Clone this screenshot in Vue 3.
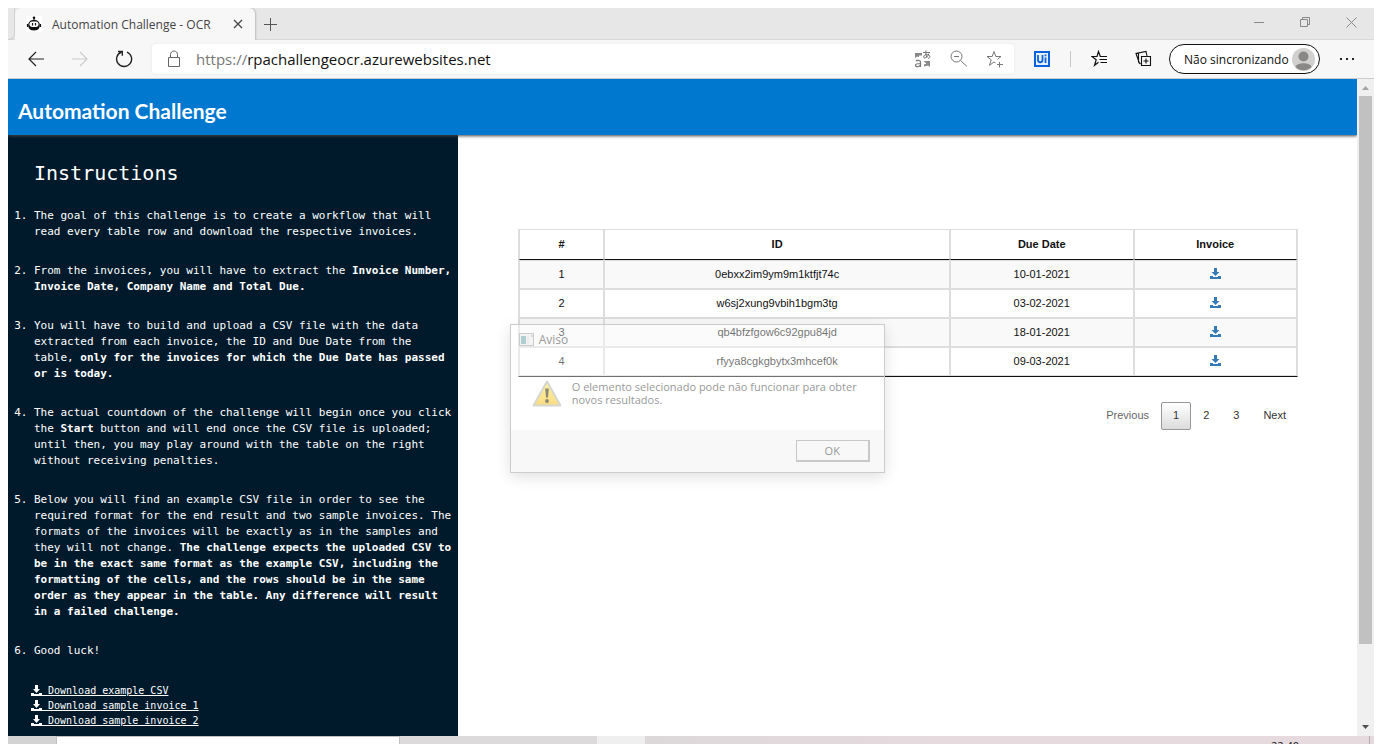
<script setup>
import { ref } from 'vue'

const protocol = 'https://'
const address = ref('rpachallengeocr.azurewebsites.net')

const invoices = [
  { n: 1, id: '0ebxx2im9ym9m1ktfjt74c', due: '10-01-2021' },
  { n: 2, id: 'w6sj2xung9vbih1bgm3tg', due: '03-02-2021' },
  { n: 3, id: 'qb4bfzfgow6c92gpu84jd', due: '18-01-2021' },
  { n: 4, id: 'rfyya8cgkgbytx3mhcef0k', due: '09-03-2021' },
]

const downloads = [
  'Download example CSV',
  'Download sample invoice 1',
  'Download sample invoice 2',
]

const pages = [1, 2, 3]
const currentPage = ref(1)
</script>

<template>
  <div class="desktop">
    <div class="browser">
      <div class="tabstrip">
        <div class="tab-edge"></div>
        <div class="tab">
          <svg class="favicon" width="16" height="16" viewBox="0 0 16 16" aria-hidden="true">
            <rect width="16" height="16" fill="#fff" />
            <circle cx="8" cy="1.800" r="1.300" fill="#111" />
            <path d="M8 2v3" stroke="#111" stroke-width="1.200" />
            <path d="M8 4c3.800 0 5.800 2 5.800 5.300 0 3.500-2.300 5.200-5.800 5.200s-5.800-1.700-5.800-5.200C2.200 6 4.200 4 8 4z" fill="#111" />
            <path d="M1.500 8v3M14.500 8v3" stroke="#111" stroke-width="1.200" />
            <rect x="3.500" y="5.500" width="9" height="5.500" rx="2.700" fill="#fff" />
            <path d="M6.500 7v2.400M9.500 7v2.400" stroke="#111" stroke-width="1.200" />
          </svg>
          <span class="tab-title">Automation Challenge - OCR</span>
          <button class="icon-btn tab-close" aria-label="Close tab">
            <svg width="10" height="10" viewBox="0 0 10 10"><path d="M1 1l8 8M9 1l-8 8" stroke="#444" stroke-width="1.300" /></svg>
          </button>
        </div>
        <button class="icon-btn new-tab" aria-label="New tab">
          <svg width="13" height="13" viewBox="0 0 13 13"><path d="M6.500 0v13M0 6.500h13" stroke="#555" /></svg>
        </button>
        <div class="window-controls">
          <button class="icon-btn" aria-label="Minimize">
            <svg width="11" height="11" viewBox="0 0 11 11"><path d="M0 5.500h10" stroke="#888" /></svg>
          </button>
          <button class="icon-btn" aria-label="Restore">
            <svg width="11" height="11" viewBox="0 0 11 11" fill="none" stroke="#888"><path d="M.5 2.500h7v7h-7zM2.500 2.500v-2h7v7h-2" /></svg>
          </button>
          <button class="icon-btn" aria-label="Close">
            <svg width="11" height="11" viewBox="0 0 11 11"><path d="M.5 .5l10 10M10.500 .5l-10 10" stroke="#888" /></svg>
          </button>
        </div>
      </div>

      <div class="toolbar">
        <button class="icon-btn nav" aria-label="Back">
          <svg width="16" height="16" viewBox="0 0 16 16" fill="none" stroke="#222" stroke-width="1.200"><path d="M16 8H1M8 1L1 8l7 7" /></svg>
        </button>
        <button class="icon-btn nav" aria-label="Forward">
          <svg width="16" height="16" viewBox="0 0 16 16" fill="none" stroke="#ccc" stroke-width="1.200"><path d="M0 8h15M8 1l7 7-7 7" /></svg>
        </button>
        <button class="icon-btn nav" aria-label="Refresh">
          <svg width="18" height="18" viewBox="0 0 18 18" fill="none" stroke="#222" stroke-width="1.400"><path d="M12 2.100A7.500 7.500 0 1 1 6.500 2" /><path d="M3 1.500h4.300v4.300" /></svg>
        </button>
        <div class="address">
          <svg class="lock" width="14" height="18" viewBox="0 0 14 18" fill="none" stroke="#666"><path d="M1.500 7.500h11v9h-11zM3.500 7.500V4.500c0-2 1.500-3.500 3.500-3.500s3.500 1.500 3.500 3.500v3" /></svg>
          <label class="protocol" for="url">{{ protocol }}</label>
          <input id="url" v-model="address" class="url" type="text" />
          <button class="icon-btn field-icon" aria-label="Translate">
            <svg width="18" height="18" viewBox="0 0 18 18" fill="none" stroke="#777">
              <path d="M1 3h7v2.500H5V7L3 6.500 1 8z" fill="#888" stroke="none" />
              <path d="M9.500 11H16v6l-2-1.500-4 1v-2l2.500-1z" fill="#888" stroke="none" />
              <path d="M9 2.500h7M12 .5c-.3 3 0 5 1 7M15 3.500c-1 3-3 4.500-4.500 4.500s-1-3.500 2-3.500c3.500 0 5 3 1.500 4" />
              <path d="M2 11c1-1 4.500-1 4.500 1v5M6.500 13.500c-4 0-5 .5-5 1.800 0 2 4 1.700 5-.3" stroke-width="1.200" />
            </svg>
          </button>
          <button class="icon-btn field-icon" aria-label="Zoom out">
            <svg width="18" height="18" viewBox="0 0 18 18" fill="none" stroke="#777"><circle cx="6.500" cy="6.500" r="5.500" /><path d="M10.500 10.500l6.500 6M4 6.500h5" /></svg>
          </button>
          <button class="icon-btn field-icon" aria-label="Add favorite">
            <svg width="18" height="18" viewBox="0 0 18 18" fill="none" stroke="#777"><path d="M9.500 13L8 12l-4.500 3.300 1.700-5.500L1 6.500h5.200L8 1.500l1.800 5H15L11.500 9.300M11 14.500h6M13.500 12v5.500" /></svg>
          </button>
        </div>
        <button class="icon-btn uipath" aria-label="UiPath">
          <svg width="16" height="16" viewBox="0 0 16 16" fill="none">
            <rect x="1" y="1" width="14" height="14" fill="#e8f1ff" stroke="#0b62dd" stroke-width="2" />
            <path d="M4 4v5c0 3 4.500 3 4.500 0V4M11.500 6.500V12M11.500 3.500v1.800" stroke="#0b62dd" stroke-width="1.800" />
          </svg>
        </button>
        <span class="divider"></span>
        <button class="icon-btn tool" aria-label="Favorites">
          <svg width="18" height="18" viewBox="0 0 18 18" fill="none" stroke="#111" stroke-width="1.200"><path d="M7.500 12.300L3.500 15.300l1.700-5.500L1 6.500h5L7.500 1.500l1.800 5H13M8.500 9.500H16M9.500 12.500H16M9 6.500h7" /></svg>
        </button>
        <button class="icon-btn tool" aria-label="Collections">
          <svg width="18" height="18" viewBox="0 0 18 18" fill="none" stroke="#111" stroke-width="1.100"><path d="M6.500 6.500h9v9h-9zM11 8.500v5M8.500 11h5M4.500 13.500L1.500 5 1 3.500l10-2 1 4.500M3.500 3v9l2 2" /></svg>
        </button>
        <button class="profile">
          <span>Não sincronizando</span>
          <svg width="23" height="23" viewBox="0 0 23 23">
            <circle cx="11.500" cy="11.500" r="11.500" fill="#d2d0ce" />
            <circle cx="11.500" cy="8.500" r="5" fill="#8a8886" />
            <path d="M3.500 19c1-5 15-5 16 0a11.500 11.500 0 0 1-16 0z" fill="#8a8886" />
          </svg>
        </button>
        <button class="icon-btn more" aria-label="Settings and more">
          <svg width="16" height="4" viewBox="0 0 16 4" fill="#222"><path d="M1 1h2v2H1zM7 1h2v2H7zM13 1h2v2h-2z" /></svg>
        </button>
      </div>

      <div class="viewport">
        <div class="page">
          <header class="banner"><h1>Automation Challenge</h1></header>
          <div class="columns">
            <aside class="sidebar">
              <h2>Instructions</h2>
              <ol class="steps">
                <li>The goal of this challenge is to create a workflow that will read every table row and download the respective invoices.</li>
                <li>From the invoices, you will have to extract the <b>Invoice Number, Invoice Date, Company Name and Total Due.</b></li>
                <li>You will have to build and upload a CSV file with the data extracted from each invoice, the ID and Due Date from the table, <b>only for the invoices for which the Due Date has passed or is today.</b></li>
                <li>The actual countdown of the challenge will begin once you click the <b>Start</b> button and will end once the CSV file is uploaded; until then, you may play around with the table on the right without receiving penalties.</li>
                <li>Below you will find an example CSV file in order to see the required format for the end result and two sample invoices. The formats of the invoices will be exactly as in the samples and they will not change. <b>The challenge expects the uploaded CSV to be in the exact same format as the example CSV, including the formatting of the cells, and the rows should be in the same order as they appear in the table. Any difference will result in a failed challenge.</b></li>
                <li>Good luck!</li>
              </ol>
              <div class="downloads">
                <a v-for="d in downloads" :key="d" href="#">
                  <svg width="11" height="11" viewBox="0 0 11 11" fill="#fff"><path d="M4 0h3v4h2L5.500 8 2 4h2zM0 8h3v1h5V8h3v3H0z" /></svg>
                  <span>&nbsp;{{ d }}</span>
                </a>
              </div>
            </aside>

            <main class="content">
              <table>
                <thead>
                  <tr>
                    <th class="c-num">#</th>
                    <th class="c-id">ID</th>
                    <th class="c-due">Due Date</th>
                    <th class="c-inv">Invoice</th>
                  </tr>
                </thead>
                <tbody>
                  <tr v-for="row in invoices" :key="row.n">
                    <td>{{ row.n }}</td>
                    <td>{{ row.id }}</td>
                    <td>{{ row.due }}</td>
                    <td>
                      <a href="#" aria-label="Download invoice">
                        <svg width="11" height="11" viewBox="0 0 11 11" fill="#337ab7"><path d="M4 0h3v4h2.500L5.500 8 1.500 4H4zM0 8h3v1h5V8h3v3H0z" /></svg>
                      </a>
                    </td>
                  </tr>
                </tbody>
              </table>

              <nav class="pagination">
                <button class="prev">Previous</button>
                <button
                  v-for="p in pages"
                  :key="p"
                  :class="{ current: p === currentPage }"
                  @click="currentPage = p"
                >{{ p }}</button>
                <button>Next</button>
              </nav>

              <div class="dialog" role="dialog" aria-labelledby="dlg-title">
                <div class="dlg-head">
                  <svg width="15" height="13" viewBox="0 0 15 13">
                    <rect x=".5" y=".5" width="14" height="12" fill="#f4f4f4" stroke="#ccc" />
                    <rect x="2" y="3" width="5" height="8" fill="#b0cdd0" />
                    <path d="M9 2v9" stroke="#e4e4e4" /><path d="M12 3h2" stroke="#bbb" />
                  </svg>
                  <span id="dlg-title">Aviso</span>
                </div>
                <div class="dlg-body">
                  <svg width="30" height="27" viewBox="0 0 30 27">
                    <defs>
                      <linearGradient id="warn" x1="0" y1="0" x2="0" y2="1">
                        <stop offset="0" stop-color="#faf3a0" />
                        <stop offset="1" stop-color="#fadc85" />
                      </linearGradient>
                    </defs>
                    <path d="M15 1.500L28.500 25.500h-27z" fill="url(#warn)" stroke="#d6d6d0" stroke-width="2" stroke-linejoin="round" />
                    <path d="M13.200 8.500h3.600l-.8 9h-2z" fill="#8b8876" />
                    <circle cx="15" cy="21" r="1.900" fill="#8b8876" />
                  </svg>
                  <p>O elemento selecionado pode não funcionar para obter novos resultados.</p>
                </div>
                <div class="dlg-foot"><button>OK</button></div>
              </div>
            </main>
          </div>
        </div>
        <div class="scrollbar" aria-hidden="true">
          <svg width="17" height="17" viewBox="0 0 17 17"><path d="M5 11l3.500-4 3.500 4z" fill="#a3a3a3" /></svg>
          <div class="track"><div class="thumb"></div></div>
          <svg width="17" height="17" viewBox="0 0 17 17"><path d="M5 6h7l-3.500 4z" fill="#505050" /></svg>
        </div>
      </div>
    </div>
    <div class="taskbar">
      <div class="tb-start"></div>
      <div class="tb-search"></div>
      <div class="tb-apps"></div>
      <div class="tb-active"></div>
      <div class="tb-rest"><span class="clock">22:40</span><span class="peek"></span></div>
    </div>
  </div>
</template>

<style>
body {
  margin: 0;
  background: #fff;
}
</style>

<style scoped>
* {
  box-sizing: border-box;
}
button {
  font: inherit;
  padding: 0;
  border: 0;
  background: none;
  color: inherit;
}
svg {
  display: block;
  flex: none;
}
.desktop {
  display: flex;
  flex-direction: column;
  height: 100vh;
  padding: 8px 8px 0;
  overflow: hidden;
  font-family: "Open Sans", "Noto Sans", sans-serif;
}
.browser {
  flex: 1;
  min-height: 0;
  display: flex;
  flex-direction: column;
}
.icon-btn {
  display: flex;
  align-items: center;
  justify-content: center;
}

.tabstrip {
  flex: none;
  display: flex;
  height: 32px;
  background: #e7e7e7;
  box-shadow: inset 0 -1px #d9d9d9;
}
.tab-edge {
  width: 7px;
  border-right: 1px solid #d0d0d0;
  border-bottom: 1px solid #ccc;
  border-radius: 0 0 6px 0;
}
.tab {
  display: flex;
  align-items: center;
  width: 240px;
  padding: 0 11px;
  background: #f7f7f7;
  border-radius: 6px 6px 0 0;
  box-shadow: 1px 0 2px #bbb;
  clip-path: inset(0 -4px 0 0);
}
.tab-title {
  flex: 1;
  margin-left: 10px;
  font-size: 12px;
  color: #444;
  white-space: nowrap;
}
.tab-close {
  width: 12px;
}
.new-tab {
  width: 30px;
}
.window-controls {
  display: flex;
  margin-left: auto;
}
.window-controls button {
  width: 46px;
  height: 28px;
}

.toolbar {
  flex: none;
  display: flex;
  align-items: center;
  height: 39px;
  padding-left: 6px;
  background: #f7f7f7;
  border-bottom: 1px solid #ccc;
}
.nav {
  width: 44px;
}
.address {
  flex: 1;
  display: flex;
  align-items: center;
  height: 30px;
  margin-left: 6px;
  padding: 0 1px 0 15px;
  background: #fff;
  border-radius: 4px;
  box-shadow: 0 0 3px #e4e4e4;
  font-size: 15px;
}
.protocol {
  margin-left: 15px;
  color: #777;
}
.url {
  flex: 1;
  min-width: 0;
  padding: 0;
  border: 0;
  outline: 0;
  background: none;
  font: inherit;
  color: #111;
}
.field-icon {
  width: 36px;
}
.uipath {
  width: 16px;
  margin-left: 20px;
}
.divider {
  width: 1px;
  height: 16px;
  margin: 0 7px 0 20px;
  background: #c6c6c6;
}
.tool {
  width: 44px;
}
.profile {
  display: flex;
  align-items: center;
  justify-content: space-between;
  width: 151px;
  height: 30px;
  margin-left: 3px;
  padding: 0 4px 0 14px;
  border: 1px solid #111;
  border-radius: 15px;
  background: #fff;
  font-size: 12px;
  color: #111;
  white-space: nowrap;
}
.more {
  width: 54px;
}

.viewport {
  flex: 1;
  min-height: 0;
  display: flex;
}
.page {
  flex: 1;
  min-width: 0;
  display: flex;
  flex-direction: column;
  overflow: hidden;
}
.banner {
  z-index: 1;
  flex: none;
  display: flex;
  align-items: center;
  height: 56px;
  padding: 6px 10px 0;
  background: #0078d0;
  box-shadow: 0 1px 3px #444;
}
.banner h1 {
  margin: 0;
  font: 700 21px Lato, "Noto Sans", sans-serif;
  color: #fff;
}
.columns {
  flex: 1;
  min-height: 0;
  display: flex;
}
.sidebar {
  flex: none;
  width: 33.34%;
  padding: 26px 6px 0 26px;
  background: #001a2c;
  color: #fff;
  font-family: "DejaVu Sans Mono", "Liberation Mono", monospace;
  overflow: hidden;
}
.sidebar h2 {
  margin: 0;
  font-size: 20px;
  font-weight: 400;
  line-height: 24px;
}
.steps {
  margin: 23px 0 0;
  padding: 0;
  font-size: 11px;
  line-height: 16px;
}
.steps li {
  margin-bottom: 23px;
}
.downloads {
  display: flex;
  flex-direction: column;
  align-items: flex-start;
  margin-left: -3px;
  padding-top: 1px;
  font-size: 10px;
  line-height: 15px;
}
.downloads a {
  display: flex;
  align-items: center;
  color: #fff;
  text-decoration: none;
}
.downloads span {
  text-decoration: underline;
}

.content {
  position: relative;
  flex: 1;
  min-width: 0;
  padding: 94px 59px 0 60px;
  font: 11px "Liberation Sans", Arial, sans-serif;
  color: #111;
}
table {
  width: 100%;
  table-layout: fixed;
  border: solid #ddd;
  border-width: 0 1px;
  border-bottom: 1px solid #111;
  border-spacing: 0;
  text-align: center;
}
th,
td {
  height: 29px;
  padding: 0 0 2px;
  border: 1px solid #ddd;
}
th {
  height: 31px;
  border-bottom-color: #111;
}
.c-num { width: 11%; }
.c-id { width: 44.4%; }
.c-due { width: 23.6%; }
.c-inv { width: 21%; }
tbody tr:nth-child(odd) td {
  background: #f9f9f9;
}
td svg {
  margin: 0 auto;
}
.pagination {
  display: flex;
  justify-content: flex-end;
  margin-top: 25px;
  color: #333;
}
.pagination button {
  height: 28px;
  padding: 0 11px 2px;
  border: 1px solid transparent;
  border-radius: 2px;
}
.pagination .prev {
  color: #666;
}
.pagination .current {
  border-color: #979797;
  background: linear-gradient(#fff, #dcdcdc);
}

.dialog {
  position: absolute;
  left: 52px;
  top: 189px;
  display: flex;
  flex-direction: column;
  width: 375px;
  height: 149px;
  border: 1px solid #ccc;
  background: rgba(255, 255, 255, 0.4);
  box-shadow: 0 4px 14px rgba(0, 0, 0, 0.12);
  font-family: "Open Sans", "Noto Sans", sans-serif;
  color: #999;
}
.dlg-head {
  display: flex;
  align-items: center;
  gap: 5px;
  height: 29px;
  padding-left: 8px;
  font-size: 12px;
}
.dlg-body {
  flex: 1;
  display: flex;
  align-items: flex-start;
  gap: 10px;
  padding: 26px 20px 0 21px;
}
.dlg-body p {
  margin: 0;
  font-size: 11px;
  line-height: 13px;
}
.dlg-foot {
  display: flex;
  align-items: center;
  justify-content: flex-end;
  height: 42px;
  padding-right: 14px;
  background: #f8f8f8;
}
.dlg-foot button {
  width: 74px;
  height: 22px;
  border: 1px solid #c8c8c8;
  border-right-width: 2px;
  border-bottom-width: 2px;
  font-size: 11px;
}

.scrollbar {
  flex: none;
  display: flex;
  flex-direction: column;
  width: 17px;
  background: #f0f0f0;
}
.track {
  flex: 1;
  padding: 0 2px;
}
.thumb {
  height: 88%;
  background: #c1c1c1;
}

.taskbar {
  flex: none;
  display: flex;
  height: 8px;
  overflow: hidden;
  background: #dcdadb;
}
.tb-start {
  width: 48px;
  background: #d4d3d4;
}
.tb-search {
  width: 344px;
  background: #fff;
  border: solid #c0c0c0;
  border-width: 1px 1px 0;
}
.tb-apps {
  width: 197px;
}
.tb-active {
  width: 48px;
  background: #efefef;
}
.tb-rest {
  flex: 1;
  display: flex;
  justify-content: flex-end;
  background: linear-gradient(90deg, #dcd8da, #e6dade 40%);
}
.clock {
  margin-top: 2px;
  font-size: 11px;
  line-height: 15px;
  color: #111;
}
.peek {
  width: 1px;
  margin: 0 4px 0 70px;
  background: #b5a9ad;
}
</style>
